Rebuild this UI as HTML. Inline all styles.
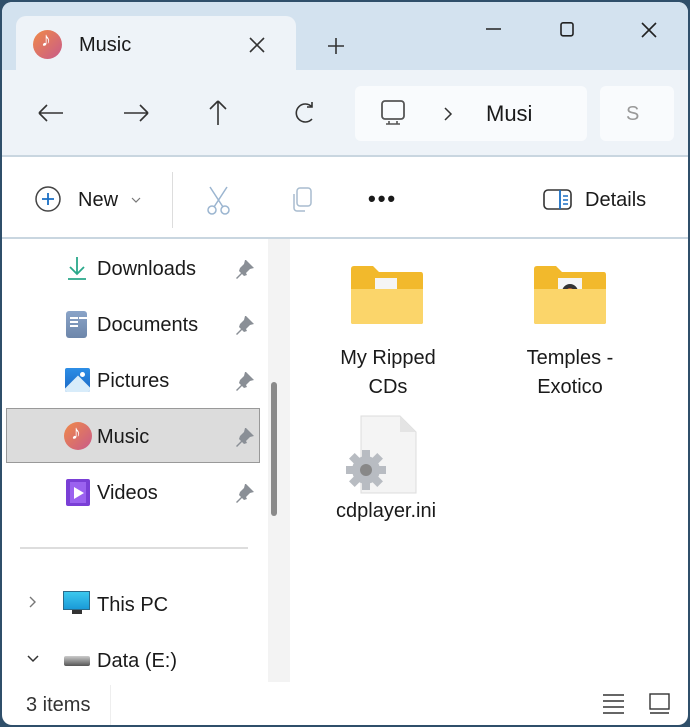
<!DOCTYPE html>
<html><head><meta charset="utf-8"><style>
*{margin:0;padding:0;box-sizing:border-box}
body{width:690px;height:727px;background:#2f4f6a;font-family:"Liberation Sans",sans-serif;color:#1a1a1a;overflow:hidden;position:relative}
#win{position:absolute;left:2px;top:2px;width:686px;height:723px;background:#fff;border-radius:10px;overflow:hidden}
.t{position:absolute;white-space:nowrap}
</style></head><body>
<div id="win">
 <div style="position:absolute;left:0;top:0;width:686px;height:70px;background:#d3e2ef"></div>
 <div style="position:absolute;left:14px;top:14px;width:280px;height:60px;background:#eef3f8;border-radius:10px 10px 0 0"></div>
 <div style="position:absolute;left:0;top:68px;width:686px;height:86px;background:#eef3f8"></div>
 <div style="position:absolute;left:0;top:153px;width:686px;height:2px;background:#c9d6e0"></div>
 <div style="position:absolute;left:0;top:235px;width:686px;height:2px;background:#c9d6e0"></div>
 <div style="position:absolute;left:31px;top:28px;width:29px;height:29px;border-radius:50%;background:linear-gradient(135deg,#f08a48,#c85a8a)"></div>
 <div class="t" style="left:39px;top:27px;font-size:20px;color:#fff">♪</div>
 <div class="t" style="left:77px;top:32px;font-size:20px">Music</div>
 <svg style="position:absolute;left:246px;top:34px" width="18" height="18"><path d="M2 2L16 16M16 2L2 16" stroke="#333" stroke-width="1.6"/></svg>
 <svg style="position:absolute;left:325px;top:35px" width="18" height="18"><path d="M9 1V17M1 9H17" stroke="#333" stroke-width="1.6"/></svg>
 <svg style="position:absolute;left:470px;top:20px" width="200" height="20"><path d="M14 7H29" stroke="#222" stroke-width="1.5"/><rect x="89" y="0.8" width="12" height="13" rx="2" fill="none" stroke="#222" stroke-width="1.6"/><path d="M170 1L184 15M184 1L170 15" stroke="#222" stroke-width="1.6"/></svg>
 <svg style="position:absolute;left:30px;top:95px" width="300" height="30"><g stroke="#333" stroke-width="1.6" fill="none"><path d="M7 16H31M7 16L15 8M7 16L15 24"/><path d="M92 16H116M116 16L108 8M116 16L108 24"/><path d="M186 4V28M186 4L178 12M186 4L194 12"/><path d="M280 10A9 9 0 1 0 280 22M280 5V10H275" /></g></svg>
 <div style="position:absolute;left:353px;top:84px;width:232px;height:55px;background:#f9fbfd;border-radius:6px"></div>
 <div style="position:absolute;left:598px;top:84px;width:74px;height:55px;background:#f9fbfd;border-radius:6px"></div>
 <svg style="position:absolute;left:378px;top:98px" width="30" height="28"><rect x="2" y="1" width="22" height="18" rx="3" fill="none" stroke="#555" stroke-width="1.8"/><path d="M9 21V24H17V21M6 24H20" stroke="#555" stroke-width="1.6" fill="none"/></svg>
 <svg style="position:absolute;left:440px;top:103px" width="12" height="18"><path d="M3 3L9 9L3 15" stroke="#333" stroke-width="1.5" fill="none"/></svg>
 <div class="t" style="left:484px;top:99px;font-size:22px">Musi</div>
 <div class="t" style="left:624px;top:101px;font-size:20px;color:#999">S</div>
 <svg style="position:absolute;left:33px;top:184px" width="28" height="28"><circle cx="13" cy="13" r="12" fill="none" stroke="#444" stroke-width="1.5"/><path d="M13 7V19M7 13H19" stroke="#1a6fc4" stroke-width="1.8"/></svg>
 <div class="t" style="left:76px;top:187px;font-size:20px">New</div>
 <svg style="position:absolute;left:128px;top:194px" width="12" height="8"><path d="M2 2L6 6L10 2" stroke="#777" stroke-width="1.2" fill="none"/></svg>
 <div style="position:absolute;left:170px;top:170px;width:1px;height:56px;background:#ddd"></div>
 <svg style="position:absolute;left:203px;top:183px" width="28" height="30"><g stroke="#9bb5d0" stroke-width="1.5" fill="none"><path d="M5 2L18 22M22 2L9 22"/><circle cx="7" cy="25" r="4"/><circle cx="20" cy="25" r="4"/></g></svg>
 <svg style="position:absolute;left:287px;top:184px" width="30" height="30"><g stroke="#a8bccf" stroke-width="1.5" fill="none"><rect x="8" y="2" width="14" height="18" rx="3"/><path d="M5 8V22A3 3 0 0 0 8 25H16"/></g></svg>
 <div class="t" style="left:366px;top:184px;font-size:22px;letter-spacing:2px;font-weight:bold">•••</div>
 <svg style="position:absolute;left:540px;top:186px" width="32" height="24"><rect x="2" y="2" width="27" height="19" rx="4" fill="none" stroke="#333" stroke-width="1.6"/><path d="M18 2V21" stroke="#1a6fc4" stroke-width="1.8"/><path d="M21 8H26M21 12H26M21 16H26" stroke="#1a6fc4" stroke-width="1.5"/></svg>
 <div class="t" style="left:583px;top:187px;font-size:20px">Details</div>
 <div style="position:absolute;left:266px;top:237px;width:22px;height:443px;background:#f3f3f3"></div>
 <div style="position:absolute;left:269px;top:380px;width:6px;height:134px;background:#8a8a8a;border-radius:3px"></div>
 <div style="position:absolute;left:4px;top:406px;width:254px;height:55px;background:#dcdcdc;border:1px solid #999"></div>
 <svg style="position:absolute;left:64px;top:253px" width="22" height="26"><path d="M11 2V19M4 12L11 19L18 12M2 24H20" stroke="#2aa88a" stroke-width="1.8" fill="none"/></svg>
 <div class="t" style="left:95px;top:256px;font-size:20px">Downloads</div>
 <div style="position:absolute;left:64px;top:309px;width:21px;height:27px;border-radius:3px;background:linear-gradient(#8aa4c8,#6d86aa)"></div>
 <div style="position:absolute;left:68px;top:315px;width:8px;height:2px;background:#fff;box-shadow:0 4px #fff,0 8px #fff,9px 0 #fff"></div>
 <div class="t" style="left:95px;top:312px;font-size:20px">Documents</div>
 <div style="position:absolute;left:63px;top:366px;width:25px;height:24px;background:linear-gradient(#2d8ee6,#1a67c4);border-radius:2px;overflow:hidden"><div style="position:absolute;left:2px;top:12px;width:22px;height:22px;background:#d8ecfa;transform:rotate(45deg)"></div><div style="position:absolute;left:15px;top:4px;width:5px;height:5px;border-radius:50%;background:#fff"></div></div>
 <div class="t" style="left:95px;top:368px;font-size:20px">Pictures</div>
 <div style="position:absolute;left:62px;top:420px;width:28px;height:28px;border-radius:50%;background:linear-gradient(135deg,#f08a48,#c85a8a)"></div>
 <div class="t" style="left:69px;top:420px;font-size:20px;color:#fff">♪</div>
 <div class="t" style="left:95px;top:424px;font-size:20px">Music</div>
 <div style="position:absolute;left:64px;top:477px;width:24px;height:27px;background:#7a3fd6;border-radius:2px"></div>
 <div style="position:absolute;left:68px;top:480px;width:16px;height:21px;background:#9b62ef"></div>
 <svg style="position:absolute;left:71px;top:484px" width="12" height="14"><path d="M1 1L11 7L1 13Z" fill="#fff"/></svg>
 <div class="t" style="left:95px;top:480px;font-size:20px">Videos</div>
 <svg style="position:absolute;left:232px;top:256px" width="24" height="250"><g fill="#8a8f96"><path d="M12 2L20 10L16 11L12 15L13 17L10 18L8 16L3 21L2 20L7 15L5 13L6 10L10 6L11 2Z"/><path transform="translate(0,56)" d="M12 2L20 10L16 11L12 15L13 17L10 18L8 16L3 21L2 20L7 15L5 13L6 10L10 6L11 2Z"/><path transform="translate(0,112)" d="M12 2L20 10L16 11L12 15L13 17L10 18L8 16L3 21L2 20L7 15L5 13L6 10L10 6L11 2Z"/><path transform="translate(0,168)" d="M12 2L20 10L16 11L12 15L13 17L10 18L8 16L3 21L2 20L7 15L5 13L6 10L10 6L11 2Z"/><path transform="translate(0,224)" d="M12 2L20 10L16 11L12 15L13 17L10 18L8 16L3 21L2 20L7 15L5 13L6 10L10 6L11 2Z"/></g></svg>
 <div style="position:absolute;left:18px;top:545px;width:228px;height:2px;background:#ddd"></div>
 <svg style="position:absolute;left:24px;top:592px" width="14" height="80"><path d="M4 3L9 8L4 13" stroke="#777" stroke-width="1.4" fill="none"/><path d="M2 62L7 67L12 62" stroke="#333" stroke-width="1.5" fill="none"/></svg>
 <div style="position:absolute;left:61px;top:589px;width:27px;height:19px;background:linear-gradient(#3cc8ee,#1a9ad8);border:1px solid #2a6a8a"></div>
 <div style="position:absolute;left:70px;top:608px;width:10px;height:4px;background:#333"></div>
 <div class="t" style="left:95px;top:592px;font-size:20px">This PC</div>
 <div style="position:absolute;left:62px;top:654px;width:26px;height:10px;background:linear-gradient(#ccc,#555);border-radius:2px"></div>
 <div class="t" style="left:95px;top:648px;font-size:20px">Data (E:)</div>
 <svg style="position:absolute;left:347px;top:262px" width="76" height="62"><path d="M2 5Q2 2 5 2H24L30 8H72Q74 8 74 11V58Q74 60 72 60H4Q2 60 2 58Z" fill="#f2b92c"/><rect x="26" y="14" width="22" height="26" fill="#f5f5f5"/><path d="M2 25H74V58Q74 60 72 60H4Q2 60 2 58Z" fill="#fbd56a"/></svg>
 <svg style="position:absolute;left:530px;top:262px" width="76" height="62"><path d="M2 5Q2 2 5 2H24L30 8H72Q74 8 74 11V58Q74 60 72 60H4Q2 60 2 58Z" fill="#f2b92c"/><rect x="26" y="14" width="24" height="26" fill="#f5f5f5"/><circle cx="38" cy="28" r="8" fill="#333"/><circle cx="38" cy="28" r="4" fill="#c0603a"/><path d="M2 25H74V58Q74 60 72 60H4Q2 60 2 58Z" fill="#fbd56a"/></svg>
 <div class="t" style="left:336px;top:342px;font-size:20px;width:100px;text-align:center;white-space:normal;line-height:29px">My Ripped CDs</div>
 <div class="t" style="left:518px;top:342px;font-size:20px;width:100px;text-align:center;white-space:normal;line-height:29px">Temples - Exotico</div>
 <svg style="position:absolute;left:342px;top:412px" width="76" height="82"><path d="M17 2H56L72 18V79H17Z" fill="#f4f4f4" stroke="#ddd"/><path d="M56 2V18H72" fill="#e4e4e4"/><g transform="translate(22,56)"><circle r="14" fill="#b8bcc2"/><g fill="#b8bcc2"><rect x="-4" y="-20" width="8" height="40"/><rect x="-20" y="-4" width="40" height="8"/><rect x="-4" y="-20" width="8" height="40" transform="rotate(45)"/><rect x="-4" y="-20" width="8" height="40" transform="rotate(-45)"/></g><circle r="6" fill="#888"/></g></svg>
 <div class="t" style="left:334px;top:498px;font-size:20px">cdplayer.ini</div>
 <div class="t" style="left:24px;top:692px;font-size:20px;color:#333">3 items</div>
 <div style="position:absolute;left:108px;top:683px;width:1px;height:40px;background:#eee"></div>
 <svg style="position:absolute;left:598px;top:690px" width="80" height="24"><path d="M3 3H24M3 9H24M3 15H24M3 21H24" stroke="#333" stroke-width="1.4"/><rect x="50" y="2" width="19" height="15" fill="none" stroke="#333" stroke-width="1.4"/><path d="M50 21H69" stroke="#333" stroke-width="1.4"/></svg>
</div>
</body></html>
